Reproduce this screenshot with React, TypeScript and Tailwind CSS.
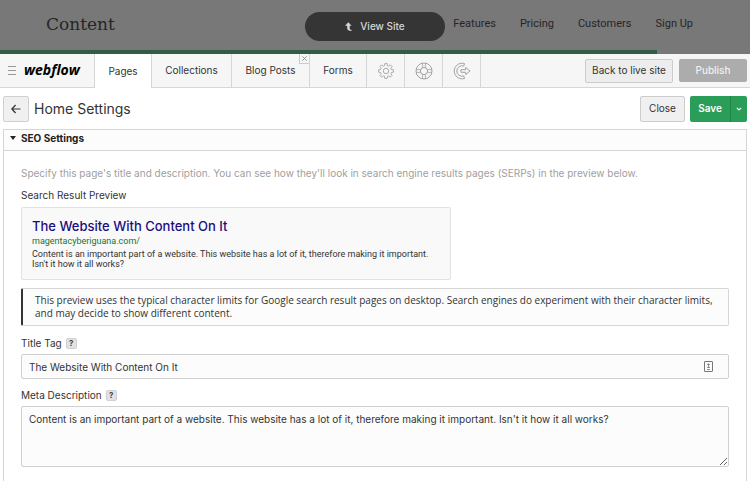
import { FC, ReactNode } from 'react';

const TITLE = 'The Website With Content On It';
const DESCRIPTION =
  "Content is an important part of a website. This website has a lot of it, therefore making it important. Isn't it how it all works?";

const siteLinks = ['Features', 'Pricing', 'Customers', 'Sign Up'];

const GearIcon: FC = () => (
  <svg className="size-4" viewBox="0 0 16 16" fill="none" stroke="currentColor" strokeWidth="0.8" strokeLinejoin="round">
    <path d="M6.8 .6h2.4l.3 2.1 1.2.5 1.7-1.3 1.7 1.7-1.3 1.7.5 1.2 2.1.3v2.4l-2.1.3-.5 1.2 1.3 1.7-1.7 1.7-1.7-1.3-1.2.5-.3 2.1H6.8l-.3-2.1-1.2-.5-1.7 1.3-1.7-1.7 1.3-1.7-.5-1.2-2.1-.3V6.8l2.1-.3.5-1.2-1.3-1.7 1.7-1.7 1.7 1.3 1.2-.5z" />
    <circle cx="8" cy="8" r="2.7" />
  </svg>
);

const HelpIcon: FC = () => (
  <svg className="size-[18px]" viewBox="0 0 18 18" fill="none" stroke="currentColor" strokeWidth="0.9">
    <circle cx="9" cy="9" r="8" />
    <circle cx="9" cy="9" r="3.6" />
    <path d="M7.6 1.200V5.600M10.400 1.200V5.600M7.600 12.400v4.400M10.400 12.400v4.400M1.200 7.600H5.600M1.200 10.400H5.600M12.400 7.600h4.400M12.400 10.400h4.400" strokeWidth="0.7" />
  </svg>
);

const LogoutIcon: FC = () => (
  <svg className="size-[18px]" viewBox="0 0 18 18" fill="none" stroke="currentColor" strokeWidth="0.9" strokeLinejoin="round">
    <path d="M11.500 1.600A7.800 7.800 0 1 0 11.500 16.400L10.700 13.900A5.200 5.200 0 1 1 10.700 4.100z" />
    <path d="M8 7.700h4.700V5.400L17 9l-4.300 3.600v-2.300H8z" />
  </svg>
);

const SiteHeader: FC = () => (
  <header className="relative bg-[#787878]">
    <div className="flex h-[50px] items-center justify-between pr-[57px] pb-[3px] pl-[46px] text-[#262626]">
      <a href="#" className="font-['DejaVu_Serif',serif] text-[17px] leading-6">
        Content
      </a>
      <nav className="flex gap-6 font-['Roboto',sans-serif] text-[11px] leading-4">
        {siteLinks.map((link) => (
          <a key={link} href="#">
            {link}
          </a>
        ))}
      </nav>
    </div>
    <div className="h-1 w-[657px] max-w-full bg-[#335c48]" />
    {/* floats over the dimmed site */}
    <button className="absolute top-3 left-1/2 flex h-[29px] w-[140px] -translate-x-1/2 items-center justify-center gap-2 rounded-full bg-[#353535] text-[10px] font-medium text-[#d5d5d5]">
      <svg className="h-[9px] w-[7px]" viewBox="0 0 8 10" fill="currentColor">
        <path d="M3.800 0L7.600 4H5.400v3.200c0 .9.6 1.500 2.100 1.700V10C4.300 10 2.500 9 2.500 7V4H0z" />
      </svg>
      View Site
    </button>
  </header>
);

interface TabProps {
  children: ReactNode;
  width: string;
  label?: string;
  active?: boolean;
  closable?: boolean;
}

const Tab: FC<TabProps> = ({ children, width, label, active, closable }) => (
  <div className={`relative flex border-r border-[#d6d6d6] ${width} ${active ? 'bg-white' : 'border-b'}`}>
    <button aria-label={label} className="flex flex-1 items-center justify-center whitespace-nowrap">
      {children}
    </button>
    {closable && (
      <button
        aria-label="Close tab"
        className="absolute top-0 right-0 flex size-[10px] items-center justify-center border-b border-l border-[#cccccc] text-[#888888]"
      >
        <svg className="size-[5px]" viewBox="0 0 5 5" stroke="currentColor" strokeWidth="0.8">
          <path d="M.3.3l4.400 4.400M4.700.3L.3 4.700" />
        </svg>
      </button>
    )}
  </div>
);

const EditorBar: FC = () => (
  <div className="flex h-[34px] bg-[#f6f6f6]">
    <div className="flex w-[95px] items-center gap-2 border-r border-b border-[#d6d6d6] pl-2">
      <button aria-label="Menu" className="text-[#999999]">
        <svg className="h-[9px] w-2" viewBox="0 0 8 9" stroke="currentColor">
          <path d="M0 .5h8M0 4.500h8M0 8.500h8" />
        </svg>
      </button>
      <a href="#" className="pb-[2px] font-['Open_Sans',sans-serif] text-[14px] leading-4 font-bold text-black italic">
        webflow
      </a>
    </div>
    <Tab width="w-[57px]" active>Pages</Tab>
    <Tab width="w-[80px]">Collections</Tab>
    <Tab width="w-[78px]" closable>Blog Posts</Tab>
    <Tab width="w-[57px]">Forms</Tab>
    <div className="flex text-[#999999]">
      <Tab width="w-[38px]" label="Settings"><GearIcon /></Tab>
      <Tab width="w-[38px]" label="Help"><HelpIcon /></Tab>
      <Tab width="w-[38px]" label="Log out"><LogoutIcon /></Tab>
    </div>
    <div className="flex flex-1 items-center justify-end gap-[6px] border-b border-[#d6d6d6] pr-[3px]">
      <button className="h-6 w-[88px] rounded-xs border border-[#cccccc] bg-[#ededed] whitespace-nowrap">
        Back to live site
      </button>
      <button className="h-[23px] w-[68px] rounded-xs bg-[#acacac] font-medium text-[#f0f0f0]">Publish</button>
    </div>
  </div>
);

const PageToolbar: FC = () => (
  <div className="flex h-[41px] items-center pr-[3px] pl-[3px]">
    <button
      aria-label="Back"
      className="flex size-[26px] items-center justify-center rounded-xs border border-[#d0d0d0] bg-[#f0f0f0] text-[#333333]"
    >
      <svg className="size-[10px]" viewBox="0 0 10 10" fill="none" stroke="currentColor" strokeWidth="1.2">
        <path d="M9.500 5H1M4.600 1L.8 5l3.800 4" />
      </svg>
    </button>
    <h1 className="ml-[5px] flex-1 text-[14px] leading-5">Home Settings</h1>
    <button className="h-[26px] w-[45px] rounded-xs border border-[#cccccc] bg-[#f0f0f0]">Close</button>
    <div className="ml-[5px] flex h-[26px] overflow-hidden rounded-xs bg-[#2a9d58] text-white">
      <button className="w-10 font-semibold">Save</button>
      <button aria-label="More save options" className="flex w-[17px] items-center justify-center border-l border-[#1d8247]">
        <svg className="h-1 w-[6px]" viewBox="0 0 6 4" fill="none" stroke="currentColor" strokeWidth="1.1">
          <path d="M.8.8L3 3 5.200.8" />
        </svg>
      </button>
    </div>
  </div>
);

const HelpBadge: FC<{ topic: string }> = ({ topic }) => (
  <button
    aria-label={`Help: ${topic}`}
    className="flex size-[11px] items-center justify-center rounded-xs border border-[#d0d0d0] bg-[#e2e2e2] text-[8px] font-semibold"
  >
    ?
  </button>
);

const SeoSettings: FC = () => (
  <section className="mx-[3px] border-x border-t border-[#d6d6d6] bg-white">
    <h2 className="border-b border-[#d6d6d6] bg-[#fcfcfc] font-bold text-[#222222]">
      <button className="flex h-5 w-full items-center gap-[5px] pb-1 pl-[6px]">
        <svg className="h-1 w-[6px]" viewBox="0 0 6 4" fill="currentColor">
          <path d="M0 0h6L3 4z" />
        </svg>
        SEO Settings
      </button>
    </h2>

    <div className="px-[17px] pt-[15px] pb-4 leading-[14px]">
      <p className="text-[#a0a0a0]">
        Specify this page's title and description. You can see how they'll look in search engine results pages (SERPs)
        in the preview below.
      </p>

      <h3 className="mt-2">Search Result Preview</h3>
      <div className="mt-[5px] max-w-[430px] rounded-xs border border-[#e2e2e2] bg-[#f9f9f9] px-[10px] pt-[9px] pb-[10px]">
        <a href="#" className="block text-[13px] leading-[18px] font-medium text-[#1a0d80]">
          {TITLE}
        </a>
        <div className="font-['Roboto',sans-serif] text-[9px] leading-3 text-[#12762f]">magentacyberiguana.com/</div>
        <p className="mt-[2px] font-['Roboto',sans-serif] text-[9px] leading-[10px]">{DESCRIPTION}</p>
      </div>

      <p className="mt-2 rounded-xs border border-l-2 border-[#d6d6d6] border-l-[#333333] bg-[#fcfcfc] py-[5px] pr-2 pl-3 font-['Open_Sans',sans-serif] leading-[13px]">
        This preview uses the typical character limits for Google search result pages on desktop. Search engines do
        experiment with their character limits, and may decide to show different content.
      </p>

      <div className="mt-[10px] flex items-center gap-1">
        <label htmlFor="title-tag">Title Tag</label>
        <HelpBadge topic="Title Tag" />
      </div>
      <div className="mt-1 flex h-[25px] items-center rounded-xs border border-[#d0d0d0] bg-[#fcfcfc] pr-[15px]">
        <input id="title-tag" type="text" defaultValue={TITLE} className="h-full flex-1 bg-transparent px-[7px] outline-none" />
        <svg className="h-[11px] w-[9px] text-[#777777]" viewBox="0 0 9 11" fill="none" stroke="currentColor">
          <rect x=".5" y=".5" width="8" height="10" rx=".5" />
          <path d="M3 3.500h3M4.500 2.500v4M3 6.500h3M3 8.500h3" strokeWidth="0.8" />
        </svg>
      </div>

      <div className="mt-[9px] flex items-center gap-1">
        <label htmlFor="meta-description">Meta Description</label>
        <HelpBadge topic="Meta Description" />
      </div>
      <textarea
        id="meta-description"
        defaultValue={DESCRIPTION}
        className="mt-1 block h-[61px] w-full rounded-xs border border-[#d0d0d0] bg-[#fcfcfc] px-[7px] py-[5px] outline-none"
      />
    </div>
  </section>
);

const App: FC = () => (
  <div className="min-h-screen bg-white font-['Inter',sans-serif] text-[10px] text-[#333333]">
    <SiteHeader />
    <EditorBar />
    <PageToolbar />
    <SeoSettings />
  </div>
);

export default App;
